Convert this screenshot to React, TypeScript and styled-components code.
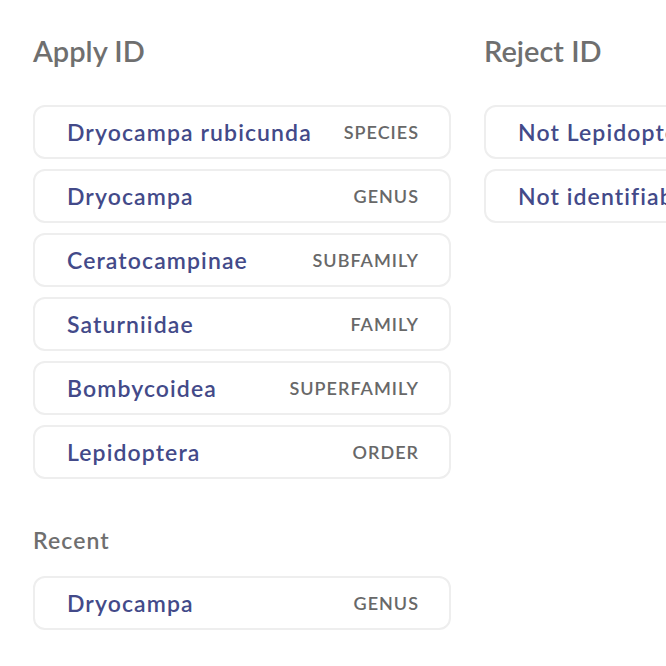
import React from "react";
import styled, { createGlobalStyle } from "styled-components";

const Global = createGlobalStyle`
  html, body { margin: 0; padding: 0; background: #ffffff; }
  body { font-family: Lato, "Noto Sans", sans-serif; overflow: hidden; }
`;

const Page = styled.div`
  width: 666px;
  height: 666px;
  overflow: hidden;
  box-sizing: border-box;
  padding: 34px 0 0 33px;
  display: grid;
  grid-template-columns: 418px 418px;
  column-gap: 33px;
  align-items: start;
`;

const Column = styled.section`
  display: flex;
  flex-direction: column;
`;

const Heading = styled.h2`
  margin: 0 0 37px 0;
  font-size: 29px;
  line-height: 34px;
  font-weight: 600;
  color: #6f6f6f;
`;

const SubHeading = styled.h3`
  margin: 47px 0 22px 0;
  font-size: 23px;
  line-height: 28px;
  font-weight: 600;
  letter-spacing: 1.1px;
  color: #6f6f6f;
`;

const List = styled.div`
  display: flex;
  flex-direction: column;
  gap: 10px;
`;

const Row = styled.button`
  all: unset;
  box-sizing: border-box;
  height: 54px;
  display: flex;
  align-items: center;
  justify-content: space-between;
  padding: 0 30px 0 32px;
  border: 2px solid #eeeeee;
  border-radius: 12px;
  background: #fff;
  cursor: pointer;
`;

const Name = styled.span`
  font-size: 23px;
  font-weight: 600;
  letter-spacing: 1.1px;
  color: #434a89;
  white-space: nowrap;
`;

const Rank = styled.span`
  font-size: 18px;
  font-weight: 600;
  letter-spacing: 1px;
  color: #686868;
  text-transform: uppercase;
`;

const taxa = [
  ["Dryocampa rubicunda", "Species"],
  ["Dryocampa", "Genus"],
  ["Ceratocampinae", "Subfamily"],
  ["Saturniidae", "Family"],
  ["Bombycoidea", "Superfamily"],
  ["Lepidoptera", "Order"],
];

export default function App() {
  return (
    <>
      <Global />
      <Page>
        <Column>
          <Heading>Apply ID</Heading>
          <List>
            {taxa.map(([n, r]) => (
              <Row key={n}>
                <Name>{n}</Name>
                <Rank>{r}</Rank>
              </Row>
            ))}
          </List>
          <SubHeading>Recent</SubHeading>
          <List>
            <Row>
              <Name>Dryocampa</Name>
              <Rank>Genus</Rank>
            </Row>
          </List>
        </Column>
        <Column>
          <Heading>Reject ID</Heading>
          <List>
            <Row>
              <Name>Not Lepidoptera</Name>
            </Row>
            <Row>
              <Name>Not identifiable</Name>
            </Row>
          </List>
        </Column>
      </Page>
    </>
  );
}
